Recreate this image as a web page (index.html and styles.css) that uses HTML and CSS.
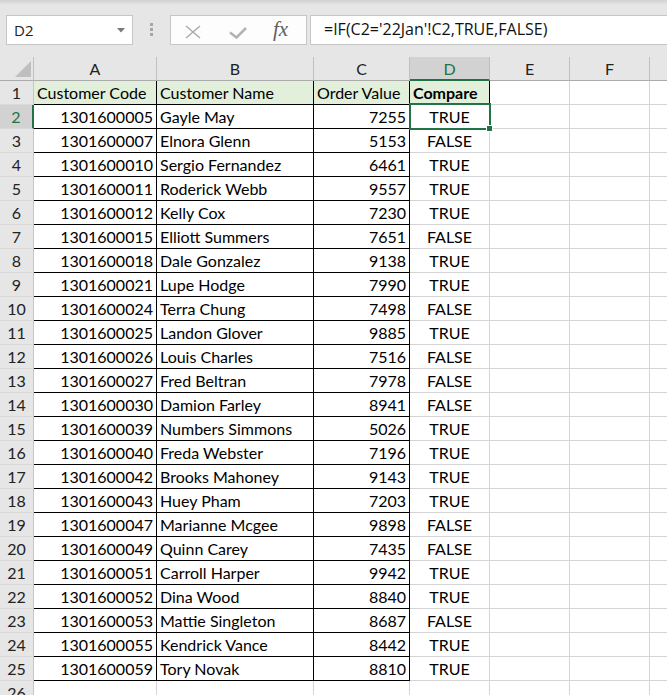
FILE: index.html
```html
<!DOCTYPE html>
<html>
<head>
<meta charset="utf-8">
<link rel="stylesheet" href="styles.css">
</head>
<body>
<div class="toolbar">
  <div class="namebox"><span class="ref">D2</span><svg class="arrow" width="8" height="5" viewBox="0 0 8 5"><polygon points="0,0 8,0 4,4.5" fill="#7a7a7a"/></svg></div>
  <div class="dots"><span></span><span></span><span></span></div>
  <div class="fxbox">
    <svg class="x-icon" width="16" height="14" viewBox="0 0 16 14"><path d="M1 1 L15 13 M15 1 L1 13" stroke="#a9a9a9" stroke-width="1.4" fill="none"/></svg>
    <svg class="ok-icon" width="18" height="12" viewBox="0 0 18 12"><path d="M1 5.5 L7.5 10.5 L17 1" stroke="#b3b3b3" stroke-width="2.6" fill="none"/></svg>
    <span class="fx">fx</span>
  </div>
  <div class="formula">=IF(C2='22Jan'!C2,TRUE,FALSE)</div>
</div>
<div class="sheet">
  <div class="row head">
    <div class="c corner"><svg width="16" height="16" viewBox="0 0 16 16"><polygon points="16,0 16,16 0,16" fill="#bfbfbf"/></svg></div>
    <div class="c ch">A</div><div class="c ch">B</div><div class="c ch">C</div><div class="c ch sel">D</div><div class="c ch">E</div><div class="c ch">F</div><div class="c ch"></div>
  </div>
  <div class="row"><div class="c rh">1</div><div class="c tb fill">Customer Code</div><div class="c tb fill">Customer Name</div><div class="c tb fill">Order Value</div><div class="c tb fill bold">Compare</div><div class="c"></div><div class="c"></div><div class="c"></div></div>
  <div class="row"><div class="c rh rsel">2</div><div class="c tb num">1301600005</div><div class="c tb">Gayle May</div><div class="c tb num">7255</div><div class="c bool active">TRUE<span class="selbox"><span class="handle"></span></span></div><div class="c"></div><div class="c"></div><div class="c"></div></div>
  <div class="row"><div class="c rh">3</div><div class="c tb num">1301600007</div><div class="c tb">Elnora Glenn</div><div class="c tb num">5153</div><div class="c bool">FALSE</div><div class="c"></div><div class="c"></div><div class="c"></div></div>
  <div class="row"><div class="c rh">4</div><div class="c tb num">1301600010</div><div class="c tb">Sergio Fernandez</div><div class="c tb num">6461</div><div class="c bool">TRUE</div><div class="c"></div><div class="c"></div><div class="c"></div></div>
  <div class="row"><div class="c rh">5</div><div class="c tb num">1301600011</div><div class="c tb">Roderick Webb</div><div class="c tb num">9557</div><div class="c bool">TRUE</div><div class="c"></div><div class="c"></div><div class="c"></div></div>
  <div class="row"><div class="c rh">6</div><div class="c tb num">1301600012</div><div class="c tb">Kelly Cox</div><div class="c tb num">7230</div><div class="c bool">TRUE</div><div class="c"></div><div class="c"></div><div class="c"></div></div>
  <div class="row"><div class="c rh">7</div><div class="c tb num">1301600015</div><div class="c tb">Elliott Summers</div><div class="c tb num">7651</div><div class="c bool">FALSE</div><div class="c"></div><div class="c"></div><div class="c"></div></div>
  <div class="row"><div class="c rh">8</div><div class="c tb num">1301600018</div><div class="c tb">Dale Gonzalez</div><div class="c tb num">9138</div><div class="c bool">TRUE</div><div class="c"></div><div class="c"></div><div class="c"></div></div>
  <div class="row"><div class="c rh">9</div><div class="c tb num">1301600021</div><div class="c tb">Lupe Hodge</div><div class="c tb num">7990</div><div class="c bool">TRUE</div><div class="c"></div><div class="c"></div><div class="c"></div></div>
  <div class="row"><div class="c rh">10</div><div class="c tb num">1301600024</div><div class="c tb">Terra Chung</div><div class="c tb num">7498</div><div class="c bool">FALSE</div><div class="c"></div><div class="c"></div><div class="c"></div></div>
  <div class="row"><div class="c rh">11</div><div class="c tb num">1301600025</div><div class="c tb">Landon Glover</div><div class="c tb num">9885</div><div class="c bool">TRUE</div><div class="c"></div><div class="c"></div><div class="c"></div></div>
  <div class="row"><div class="c rh">12</div><div class="c tb num">1301600026</div><div class="c tb">Louis Charles</div><div class="c tb num">7516</div><div class="c bool">FALSE</div><div class="c"></div><div class="c"></div><div class="c"></div></div>
  <div class="row"><div class="c rh">13</div><div class="c tb num">1301600027</div><div class="c tb">Fred Beltran</div><div class="c tb num">7978</div><div class="c bool">FALSE</div><div class="c"></div><div class="c"></div><div class="c"></div></div>
  <div class="row"><div class="c rh">14</div><div class="c tb num">1301600030</div><div class="c tb">Damion Farley</div><div class="c tb num">8941</div><div class="c bool">FALSE</div><div class="c"></div><div class="c"></div><div class="c"></div></div>
  <div class="row"><div class="c rh">15</div><div class="c tb num">1301600039</div><div class="c tb">Numbers Simmons</div><div class="c tb num">5026</div><div class="c bool">TRUE</div><div class="c"></div><div class="c"></div><div class="c"></div></div>
  <div class="row"><div class="c rh">16</div><div class="c tb num">1301600040</div><div class="c tb">Freda Webster</div><div class="c tb num">7196</div><div class="c bool">TRUE</div><div class="c"></div><div class="c"></div><div class="c"></div></div>
  <div class="row"><div class="c rh">17</div><div class="c tb num">1301600042</div><div class="c tb">Brooks Mahoney</div><div class="c tb num">9143</div><div class="c bool">TRUE</div><div class="c"></div><div class="c"></div><div class="c"></div></div>
  <div class="row"><div class="c rh">18</div><div class="c tb num">1301600043</div><div class="c tb">Huey Pham</div><div class="c tb num">7203</div><div class="c bool">TRUE</div><div class="c"></div><div class="c"></div><div class="c"></div></div>
  <div class="row"><div class="c rh">19</div><div class="c tb num">1301600047</div><div class="c tb">Marianne Mcgee</div><div class="c tb num">9898</div><div class="c bool">FALSE</div><div class="c"></div><div class="c"></div><div class="c"></div></div>
  <div class="row"><div class="c rh">20</div><div class="c tb num">1301600049</div><div class="c tb">Quinn Carey</div><div class="c tb num">7435</div><div class="c bool">FALSE</div><div class="c"></div><div class="c"></div><div class="c"></div></div>
  <div class="row"><div class="c rh">21</div><div class="c tb num">1301600051</div><div class="c tb">Carroll Harper</div><div class="c tb num">9942</div><div class="c bool">TRUE</div><div class="c"></div><div class="c"></div><div class="c"></div></div>
  <div class="row"><div class="c rh">22</div><div class="c tb num">1301600052</div><div class="c tb">Dina Wood</div><div class="c tb num">8840</div><div class="c bool">TRUE</div><div class="c"></div><div class="c"></div><div class="c"></div></div>
  <div class="row"><div class="c rh">23</div><div class="c tb num">1301600053</div><div class="c tb">Mattie Singleton</div><div class="c tb num">8687</div><div class="c bool">FALSE</div><div class="c"></div><div class="c"></div><div class="c"></div></div>
  <div class="row"><div class="c rh">24</div><div class="c tb num">1301600055</div><div class="c tb">Kendrick Vance</div><div class="c tb num">8442</div><div class="c bool">TRUE</div><div class="c"></div><div class="c"></div><div class="c"></div></div>
  <div class="row"><div class="c rh">25</div><div class="c tb num">1301600059</div><div class="c tb">Tory Novak</div><div class="c tb num">8810</div><div class="c bool">TRUE</div><div class="c"></div><div class="c"></div><div class="c"></div></div>
  <div class="row"><div class="c rh">26</div><div class="c"></div><div class="c"></div><div class="c"></div><div class="c"></div><div class="c"></div><div class="c"></div><div class="c"></div></div>
</div>
</body>
</html>
```
FILE: styles.css
```css
html, body {
  margin: 0;
  padding: 0;
}
body {
  width: 667px;
  height: 695px;
  overflow: hidden;
  background: #ffffff;
  font-family: Lato, "Liberation Sans", sans-serif;
  color: #000;
}
.toolbar {
  height: 57px;
  box-sizing: border-box;
  padding-top: 15px;
  display: flex;
  align-items: flex-start;
  background: linear-gradient(to bottom, #d3d1cf 0px, #e6e6e6 5px, #e6e6e6 100%);
  white-space: nowrap;
}
.toolbar > * {
  flex: none;
}
.namebox {
  margin-left: 6px;
  width: 127px;
  height: 30px;
  box-sizing: border-box;
  border: 1px solid #c6c6c6;
  background: #fff;
  display: flex;
  align-items: center;
  justify-content: space-between;
  padding: 0 7px 0 7px;
  font-family: "Open Sans", "Noto Sans", sans-serif;
  font-size: 15px;
  color: #222;
}
.arrow { margin-top: 1px; }
.dots {
  width: 3px;
  margin: 8px 17px 0 17px;
  display: flex;
  flex-direction: column;
  gap: 2px;
}
.dots span {
  width: 3px;
  height: 3px;
  background: #a6a6a6;
}
.fxbox {
  width: 137px;
  height: 30px;
  box-sizing: border-box;
  border: 1px solid #c6c6c6;
  background: #fdfdfd;
  display: flex;
  align-items: center;
  padding-left: 14px;
}
.x-icon { margin-top: 3px; }
.ok-icon { margin-left: 28px; margin-top: 5px; }
.fx {
  margin-left: 26px;
  font-family: "Liberation Serif", serif;
  font-style: italic;
  font-size: 21px;
  color: #5f5f5f;
  margin-top: -2px;
}
.formula {
  margin-left: 3px;
  width: 400px;
  height: 30px;
  box-sizing: border-box;
  border: 1px solid #c6c6c6;
  border-right: none;
  background: #fff;
  padding-left: 13px;
  font-family: "Open Sans", "Noto Sans", sans-serif;
  font-size: 16px;
  line-height: 27px;
  color: #111;
}
.sheet {
  display: flex;
  flex-direction: column;
}
.row {
  display: grid;
  grid-template-columns: 34px 123px 157px 96px 80px 80px 80px 80px;
  height: 24px;
  flex: none;
}
.c {
  box-sizing: border-box;
  height: 24px;
  border-right: 1px solid #d4d4d4;
  border-bottom: 1px solid #d4d4d4;
  padding: 1px 3px 0 3px;
  line-height: 22px;
  font-size: 16px;
  white-space: nowrap;
  overflow: hidden;
}
.head .c {
  background: #e6e6e6;
  border-right-color: #c0c0c0;
  border-bottom-color: #ababab;
  text-align: center;
  color: #222;
}
.corner {
  display: flex;
  justify-content: flex-end;
  align-items: flex-end;
  padding: 0 2px 3px 0 !important;
}
.head .c.sel {
  background: #d2d2d2;
  color: #217346;
  border-bottom: 2px solid #217346;
}
.rh {
  background: #e6e6e6;
  border-right-color: #c6c6c6;
  border-bottom-color: #d9d9d9;
  text-align: center;
  color: #222;
  padding-left: 0;
  padding-right: 0;
}
.rh.rsel {
  background: #d2d2d2;
  color: #217346;
  border-right: 2px solid #217346;
}
.tb {
  border-right-color: #000;
  border-bottom-color: #000;
}
.fill { background: #e2efda; }
.bold { font-weight: 700; }
.num { text-align: right; }
.bool { text-align: center; }
.active {
  position: relative;
  overflow: visible;
}
.selbox {
  position: absolute;
  left: -1px;
  top: -2px;
  right: -2px;
  bottom: -2px;
  border: 2px solid #217346;
  z-index: 2;
}
.handle {
  position: absolute;
  right: -4px;
  bottom: -4px;
  width: 5px;
  height: 5px;
  background: #217346;
  border: 1px solid #fff;
}
```
